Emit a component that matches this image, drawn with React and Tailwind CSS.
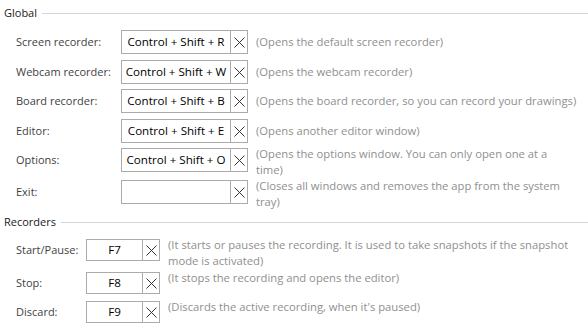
import React from 'react';

const globalRows = [
  { label: 'Screen recorder:', keys: 'Control + Shift + R', desc: ['(Opens the default screen recorder)'], h: 'h-[30px]' },
  { label: 'Webcam recorder:', keys: 'Control + Shift + W', desc: ['(Opens the webcam recorder)'], h: 'h-[29px]' },
  { label: 'Board recorder:', keys: 'Control + Shift + B', desc: ['(Opens the board recorder, so you can record your drawings)'], h: 'h-[30px]' },
  { label: 'Editor:', keys: 'Control + Shift + E', desc: ['(Opens another editor window)'], h: 'h-[29px]' },
  { label: 'Options:', keys: 'Control + Shift + O', desc: ['(Opens the options window. You can only open one at a', 'time)'], h: 'h-[32px]' },
  { label: 'Exit:', keys: '', desc: ['(Closes all windows and removes the app from the system', 'tray)'], h: 'h-[32px]' },
];

const recorderRows = [
  { label: 'Start/Pause:', keys: 'F7', desc: ['(It starts or pauses the recording. It is used to take snapshots if the snapshot', 'mode is activated)'], h: 'h-[33px]' },
  { label: 'Stop:', keys: 'F8', desc: ['(It stops the recording and opens the editor)'], h: 'h-[29px]' },
  { label: 'Discard:', keys: 'F9', desc: ['(Discards the active recording, when it\'s paused)'], h: 'h-[22px]' },
];

function ClearIcon() {
  return (
    <svg width="11" height="11" viewBox="0 0 11 11" fill="none" stroke="#333" strokeWidth="1">
      <path d="M0.5 0.5L10.5 10.5M10.5 0.5L0.5 10.5" />
    </svg>
  );
}

function KeyBox({ value, size }) {
  return (
    <div className={`flex shrink-0 border border-[#ababab] bg-white ${size}`}>
      <div className="flex flex-1 items-center justify-center text-[11.6px] text-black whitespace-nowrap">{value}</div>
      <div className="flex w-[17px] items-center justify-center border-l border-[#ababab]">
        <ClearIcon />
      </div>
    </div>
  );
}

function Header({ title }) {
  return (
    <div className="flex h-[16px] items-center gap-[5px] pl-[4px]">
      <span className="text-[#1a1a1a]">{title}</span>
      <div className="h-px flex-1 bg-[#d4d4d4]" />
    </div>
  );
}

function Row({ row, labelW, boxSize, boxH, topText }) {
  const twoLines = row.desc.length > 1;
  return (
    <div className={`flex items-start ${row.h}`}>
      <div className={`flex shrink-0 items-center pl-[16px] text-[#3f3f3f] ${labelW} ${boxH}`}>{row.label}</div>
      <KeyBox value={row.keys} size={boxSize} />
      {twoLines || topText ? (
        <div className="ml-[8px] mt-[-2px] text-[11.25px] leading-[16px] text-[#8f8f8f] whitespace-nowrap">
          {row.desc.map((d) => <div key={d}>{d}</div>)}
        </div>
      ) : (
        <div className={`ml-[8px] flex items-center text-[11.25px] leading-[16px] text-[#8f8f8f] whitespace-nowrap ${boxH}`}>
          {row.desc[0]}
        </div>
      )}
    </div>
  );
}

export default function App() {
  return (
    <div className="h-[334px] w-[588px] overflow-hidden bg-white pt-[5px] font-['Open_Sans',sans-serif] text-[11px] leading-[16px]">
      <Header title="Global" />
      <div className="mt-[9px] flex flex-col">
        {globalRows.map((r) => (
          <Row key={r.label} row={r} labelW="w-[121px]" boxSize="w-[127px] h-[24px]" boxH="h-[24px]" />
        ))}
      </div>

      <div className="mt-[2px]">
        <Header title="Recorders" />
      </div>
      <div className="mt-[9px] flex flex-col">
        {recorderRows.map((r) => (
          <Row key={r.label} row={r} labelW="w-[86px]" boxSize="w-[74px] h-[22px]" boxH="h-[22px]" topText />
        ))}
      </div>
    </div>
  );
}
